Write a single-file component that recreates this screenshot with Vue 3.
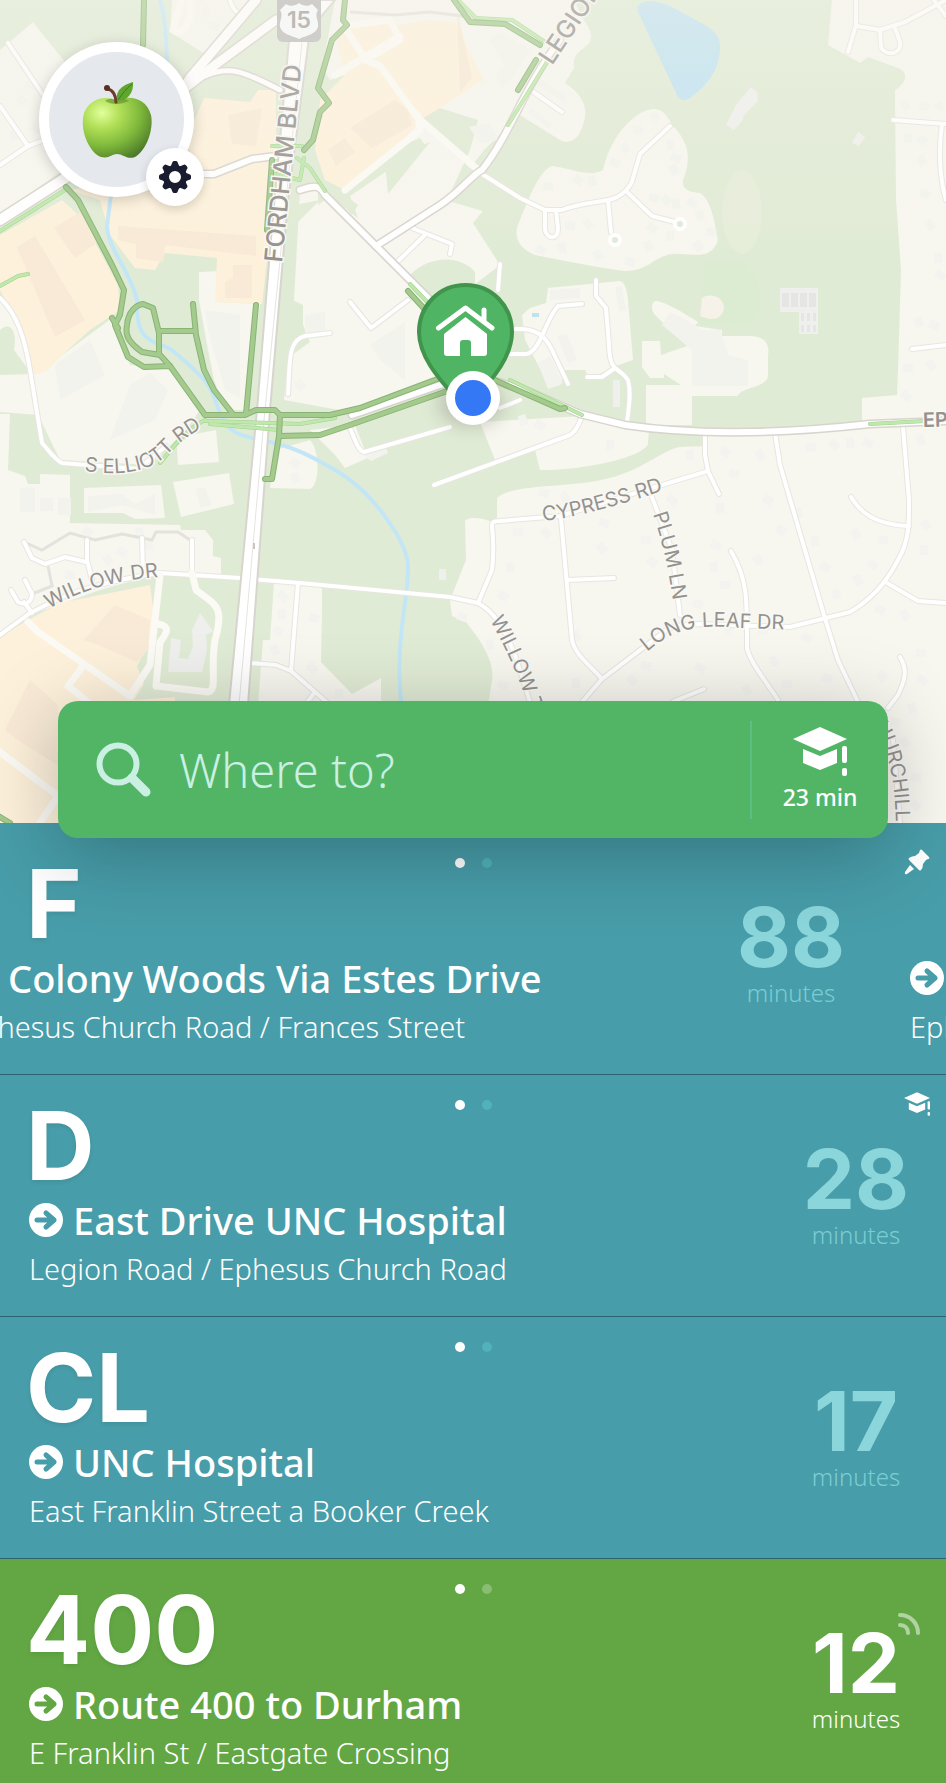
<script setup>
import { ref } from 'vue'

const query = ref('')

const land = [
  'M0 50L33 22L65 62L52 148L0 170Z',
  'M172 0H256L205 54L170 32Z',
  'M0 168L20 158L50 150L60 172L0 215Z',
  'M335 0H575C582 25 595 28 590 42C582 52 572 52 574 68L565 83C580 93 590 105 583 125C578 142 568 144 560 140L520 115L484 150L445 200L483 211L473 223L500 265L474 285V300L440 385L350 412L284 400L294 300L300 190L330 190L352 215L358 205L325 180L318 90Z',
  'M552 166C570 168 590 178 603 170C612 130 640 108 655 109C665 110 668 118 672 125C690 143 690 158 685 175C678 190 690 192 700 193C712 200 715 225 718 240C712 258 700 255 680 254C655 252 650 272 625 271C600 268 560 260 535 255C518 248 512 235 520 220C530 195 540 170 552 166Z',
  'M832 0H946V424L862 426V398L897 395L898 370L901 270L896 200L895 90C908 82 908 72 898 68L868 57L860 63L828 45Z',
  'M655 301C665 300 698 322 698 322L695 326L722 330V336H750C765 336 770 345 768 355V375C768 388 740 387 738 396H692V425H646V385L681 385L664 374V378L650 378L642 367V341H660L661 355L687 346L655 315C650 308 652 303 655 301Z',
  'M548 288L620 281C625 282 627 290 628 300L633 360L610 368L590 380L585 370L565 370L560 385L550 388L525 340L522 315L530 308L546 303Z',
  'M480 422L583 416L649 433L648 442C650 455 590 470 540 470L535 450L495 460Z',
  'M497 498C510 485 560 487 590 482C640 475 660 450 680 447L705 446V434L946 424V823H470L492 680C495 660 480 640 466 622L452 616L450 600L466 560L465 520C475 515 490 520 497 525Z',
  'M0 300L15 320L35 375L112 318L130 365L168 368L200 410L186 430L150 465L60 460L38 415L0 412Z',
  'M199 272L220 271L218 302L260 304L246 410H226L214 380L208 350L199 300Z',
  'M0 414H10L8 470L25 476L28 484H40V474L70 475V523L180 525L181 530H205L213 540V556L221 558V575L160 573L100 590L30 615L0 635Z',
  'M84 488L161 485L165 518L135 519L123 513H84Z',
  'M173 482L229 473L234 504L181 517Z',
  'M177 447L190 435L216 430L219 462L178 465Z',
  'M275 450L310 440C320 450 320 485 310 489L270 488Z',
  'M310 430L355 425L368 458L345 468L335 455Z',
  'M274 582L322 584V611L321 662L352 694L381 678V705H258L263 640H270Z'
]

const park = [
  'M300 110L320 65L330 80L345 75L322 150L318 182L300 150Z',
  'M318 182L420 138L425 145L350 196L358 218L330 196L318 205Z',
  'M400 120L440 108L478 120L470 150L445 205L472 170L425 125Z',
  'M410 275C430 255 460 255 475 272V300L430 310Z',
  'M295 205L320 200L295 225L293 300L303 305V325L310 342L285 360Z',
  'M385 160L430 142L388 194Z',
  'M0 330C10 320 18 332 14 350L30 372V374L0 375Z'
]

const retail = [
  'M0 235L62 200L82 218L118 285L120 310L90 330L60 357L48 370L35 375L15 320L0 290Z',
  'M70 190L130 180L190 130L204 98L250 102L258 90L276 90L276 170L270 235L262 304L215 302L217 258L165 253L155 270L135 268L110 235L100 200Z',
  'M340 55C330 30 350 25 375 22L400 25L425 20L455 22L484 80L440 108L420 120L400 145L345 190L325 180L315 150L320 100L345 75Z',
  'M28 620L60 603L150 585L153 608L151 640L137 666L144 684L134 700L175 697V823H0V637Z'
]

const buildings = [
  'M17 247L35 236L85 320L55 337Z', 'M54 228L80 212L98 242L75 258Z', 'M118 226L256 236V256L165 245L163 262L136 258V244L118 240Z',
  'M228 115L262 108L256 146L232 144Z', 'M233 265H252V298H225V282L233 278Z', 'M350 128L395 100L408 110L412 125L372 148Z',
  'M328 150L345 138L355 152L336 166Z', 'M84 640L115 605L150 620L148 650L137 662L98 645Z', 'M5 730L30 680L58 705V765L25 745Z', 'M457 10L472 78L460 92Z'
]

const blocks = [
  'M490 40L500 32L530 50L510 80L502 88L495 76L505 66Z', 'M205 310L240 315V398L225 390L208 330Z', 'M55 365L90 340L105 375L60 400Z',
  'M130 385L150 373L168 390L155 420L110 440Z', 'M305 315L325 312V332L305 335Z', 'M88 496L122 494L135 504L155 494V515L123 505L88 512Z',
  'M196 488H205L212 505L200 508Z', 'M40 498H53V511H40Z', 'M58 498H71V515H58Z', 'M20 488L35 487V512H20Z',
  'M687 320L670 312L662 325L692 350V386H748V360L728 355L720 330L700 330Z', 'M550 290L580 288V298L550 300Z', 'M557 336L567 334L577 360L568 363Z',
  'M538 363L550 356L563 383L548 389Z', 'M615 287L622 286L626 310L619 312Z', 'M370 345L405 322V380L380 360Z', 'M361 453L384 444L388 453L371 461Z', 'M530 80L540 78L565 95V103Z',
  'M469 127L490 122L498 140L480 143Z', 'M528 112L532 108L552 124L550 130Z'
]

const greyBlocks = [
  'M780 288H818V334H799V312H780Z', 'M171 638L181 640L179 658L188 659L193 646L192 630L200 613L205 620L213 631L206 635L207 650L202 672H168Z',
  'M736 105L751 87L757 92L758 101L744 115L742 121L734 130L726 125Z', 'M858 132L865 137L859 146L852 143Z', 'M613 380H620V407H613Z', 'M439 569H446V580H439Z'
]

/* Scattered house footprints in the residential streets. */
const houses = [
  [548, 186], [578, 180], [592, 181], [615, 163], [625, 148], [638, 130], [655, 117], [670, 145], [676, 158], [674, 170], [654, 198], [666, 200], [676, 204],
  [692, 203], [700, 215], [711, 232], [698, 246], [670, 236], [652, 228], [648, 246], [630, 262], [598, 255], [570, 226], [588, 224], [562, 248], [541, 250],
  [905, 105], [924, 107], [940, 107], [908, 138], [922, 140], [922, 160], [925, 194], [930, 225], [938, 258], [940, 275], [919, 322], [934, 325], [931, 365], [908, 368], [906, 396],
  [690, 455], [725, 452], [760, 455], [811, 447], [834, 445], [850, 443], [868, 443], [921, 440], [734, 474], [672, 500], [720, 508], [768, 500], [798, 513], [604, 523], [602, 548],
  [646, 540], [652, 562], [714, 567], [716, 545], [758, 560], [725, 585], [781, 530], [815, 541], [825, 567], [856, 534], [883, 540], [926, 525], [924, 550], [873, 565], [858, 580],
  [698, 604], [728, 628], [763, 630], [807, 638], [836, 594], [880, 610], [905, 615], [518, 532], [546, 533], [510, 567], [503, 596], [576, 636], [646, 666], [632, 680], [576, 683],
  [700, 668], [774, 661], [827, 678], [882, 676], [921, 653], [922, 680], [912, 708], [895, 722], [905, 742], [916, 777], [916, 805], [490, 645], [503, 685], [747, 690], [787, 684],
  [283, 596], [282, 614], [278, 631], [275, 650], [314, 618], [312, 668], [339, 694], [295, 463], [295, 478], [462, 617], [108, 560], [70, 575], [88, 532], [140, 533], [122, 552], [148, 545],
  [30, 85], [22, 100], [14, 135], [36, 128], [206, 12], [214, 26], [300, 385], [610, 445], [540, 425], [523, 420], [544, 493], [565, 497]
]

const minor = [
  'M8 43L45 98', 'M0 106L28 146', 'M0 165L28 146L50 138', 'M230 0C232 8 236 12 240 14', 'M0 298C18 315 25 340 30 370L42 443C50 452 55 460 62 463L138 469L166 446',
  'M350 302L371 328L408 300', 'M330 333L305 336C288 340 290 360 288 394', 'M412 228L452 244L450 254', 'M424 236L395 264',
  'M482 174L520 198L545 210L562 210C580 203 600 202 608 200C622 198 632 185 633 178L640 154L670 126', 'M545 210V230C548 240 558 240 558 228L556 210',
  'M608 200L611 232', 'M627 192L652 216L675 222', 'M596 280V296L606 308L609 345C610 375 618 365 628 380C632 395 628 410 627 423', 'M615 368L602 377H587',
  'M516 329C535 328 545 335 552 350L568 384', 'M510 354H525C540 354 545 320 558 306L582 304', 'M500 264L498 290', 'M856 0V25L848 52', 'M857 26L880 30L905 22L946 0', 'M880 30L881 48C890 58 902 52 900 42L895 28', 'M934 0L946 16',
  'M893 120L946 124M942 125C938 150 940 180 946 200', 'M912 349L946 345', 'M532 91L562 112', 'M434 485L570 435C578 430 580 420 582 416',
  'M350 428C356 442 358 450 364 452L450 427', 'M500 408L520 400', 'M0 635L30 613L60 598C80 590 110 580 160 573L240 578L300 583L450 597L478 603C495 612 505 630 515 655L530 702',
  'M478 603L492 570C495 545 492 530 492 526C492 522 494 521 500 521L560 516L708 471', 'M705 434V455L708 471L719 494', 'M561 518L572 640C575 655 590 665 602 679',
  'M650 492L672 550L680 615', 'M568 580L614 578', 'M582 702L602 679L660 635C670 625 685 624 700 624L790 627L850 612C870 600 885 585 898 560C910 540 909 520 909 500L903 427',
  'M775 433L780 465L824 615L838 660L858 702', 'M731 551C748 580 747 600 747 648C750 662 765 680 778 700', 'M851 497C860 512 875 525 909 526', 'M887 583L918 601L946 603',
  'M900 657C908 670 905 680 898 695L888 708', 'M893 740L900 823', 'M672 702L704 689', 'M298 583L291 671M250 663L276 665L291 671L330 705M305 705L315 692', 'M142 538L143 572M192 540L192 573M87 540V560L92 580M24 542L32 558L45 564L65 557L86 562',
  'M11 590L18 602C30 608 35 595 30 590L25 580M24 602L32 613'
]

const lanes = [
  'M28 622L38 632L130 696', 'M83 666L68 686L95 708', 'M130 696L150 665L160 575', 'M158 624C170 626 168 632 160 642L156 686L208 692C218 690 210 670 215 640C225 605 215 605 196 590L192 573',
  'M0 752L58 796L40 823', 'M345 190L420 130L418 115M365 60L400 40L390 20L350 25', 'M345 28L366 60L380 66L418 118L478 170', 'M335 75L400 36', 'M182 0L173 30C185 38 192 20 190 0'
]

const major = [
  { d: 'M256 0L190 78L175 100', w: 9 }, { d: 'M276 20L215 65L180 92', w: 9 }, { d: 'M0 220L70 175', w: 10 },
  { d: 'M203 174H214L252 159L276 156', w: 6 }, { d: 'M205 76C230 65 245 72 280 90', w: 5 },
  { d: 'M300 190C315 185 320 185 325 195L376 246L430 300L480 375', w: 6 }, { d: 'M376 246L440 205C460 192 475 172 482 170C510 135 525 85 560 40', w: 6 },
  { d: 'M352 415L440 385L480 376L530 392L580 414L625 425C700 436 780 434 870 424L946 421', w: 6 }
]

const trails = [
  'M66 187L78 200L112 265L124 290L120 315L115 325L128 357L144 367L170 366L200 408L205 415H245L256 410H275L280 415H330L360 408L440 378L470 370',
  'M170 366L160 355L142 352C128 342 125 335 127 325C128 312 136 305 143 304L153 308L159 333V355', 'M159 331H194', 'M193 304L196 335L204 370L214 390L232 413', 'M256 305L246 414', 'M112 318L118 328',
  'M280 415L279 436L320 435L350 425L430 397L480 380', 'M279 436L272 479L265 479', 'M345 0L343 20L347 25L332 40L318 88L329 103L320 112L313 140L304 150',
  'M144 0L143 45', 'M0 817L10 823', 'M454 0L470 22L505 24L540 45', 'M536 60L518 90', 'M408 291L430 315', 'M490 378L560 409L565 408', 'M272 160L267 230'
]

const paths = [
  'M0 231L65 190', 'M0 286L18 276L28 274', 'M205 421L300 424L335 418', 'M210 424L280 430', 'M205 420C185 430 175 445 160 463', 'M297 158L310 168L325 191M272 146H302M304 158L300 180L275 174',
  'M458 0L476 18L512 20L545 42M547 62L508 125', 'M410 284L430 305', 'M510 380L582 415', 'M870 424L925 421'
]

const labels = [
  { id: 'fordham', d: 'M282 263L306 20', text: 'FORDHAM BLVD', size: 'road' },
  { id: 'legion', d: 'M552 66L640 -66', text: 'LEGION RD', size: 'road' },
  { id: 'ephesus', d: 'M923 427L1100 423', text: 'EPHESUS', size: 'main' },
  { id: 'elliott', d: 'M84 471Q142 479 166 456Q190 430 234 412', text: 'S ELLIOTT RD' },
  { id: 'willow', d: 'M49 609C85 588 120 578 180 576', text: 'WILLOW DR' },
  { id: 'cypress', d: 'M543 521C580 517 620 505 690 482', text: 'CYPRESS RD' },
  { id: 'plum', d: 'M653 514C663 545 670 570 676 625', text: 'PLUM LN' },
  { id: 'longleaf', d: 'M647 652C675 628 698 624 740 628L830 631', text: 'LONG LEAF DR' },
  { id: 'willowterrace', d: 'M490 620C505 647 522 680 545 755', text: 'WILLOW TER' },
  { id: 'churchill', d: 'M866 713C888 745 897 775 896 850', text: 'CHURCHILL' }
]

const arrivals = [
  {
    route: 'F', minutes: 88, tone: 'teal', badge: 'pin', scroll: 65,
    title: 'Colony Woods Via Estes Drive', stop: 'Ephesus Church Road / Frances Street',
    next: { title: 'UNC Hospital', stop: 'Ephesus Church Road' }
  },
  { route: 'D', minutes: 28, tone: 'teal', badge: 'cap', scroll: 0, title: 'East Drive UNC Hospital', stop: 'Legion Road / Ephesus Church Road' },
  { route: 'CL', minutes: 17, tone: 'teal', scroll: 0, title: 'UNC Hospital', stop: 'East Franklin Street a Booker Creek' },
  { route: '400', minutes: 12, tone: 'green', live: true, scroll: 0, title: 'Route 400 to Durham', stop: 'E Franklin St / Eastgate Crossing' }
]
</script>

<template>
  <main class="app">
    <section class="map" aria-label="Map">
      <svg class="canvas" viewBox="0 0 946 823">
        <defs>
          <linearGradient id="haze" x1="0" y1="0" x2="0" y2="1">
            <stop offset="0" stop-color="#f6f3ea" stop-opacity=".4" />
            <stop offset="1" stop-color="#f6f3ea" stop-opacity="0" />
          </linearGradient>
          <radialGradient id="apple" cx=".28" cy=".25" r=".85">
            <stop offset="0" stop-color="#e2ff9c" />
            <stop offset=".3" stop-color="#b2e058" />
            <stop offset=".65" stop-color="#7fb93b" />
            <stop offset="1" stop-color="#4d7a2a" />
          </radialGradient>
          <path v-for="l in labels" :id="l.id" :key="l.id" :d="l.d" />
        </defs>
        <rect width="946" height="823" fill="#e0ebd5" />
        <ellipse cx="742" cy="212" rx="20" ry="42" fill="#e6edd9" />
        <path d="M705 262H745C765 285 765 310 750 325H700Z" fill="#dcecd2" />
        <g fill="#f7f6ef"><path v-for="d in land" :key="d" :d="d" /></g>
        <g fill="#e0ebd5"><path v-for="d in park" :key="d" :d="d" /></g>
        <g fill="#fdf1db"><path v-for="d in retail" :key="d" :d="d" /></g>
        <g fill="#f8ead6"><path v-for="d in buildings" :key="d" :d="d" /></g>
        <g fill="#f3f3ee"><path v-for="d in blocks" :key="d" :d="d" /></g>
        <g fill="#f3f3ef"><rect v-for="([x, y], i) in houses" :key="i" :x="x - 5" :y="y - 4" width="10" height="8" :transform="`rotate(${(i * 37) % 90} ${x} ${y})`" /></g>
        <g fill="#efefed"><path v-for="d in greyBlocks" :key="d" :d="d" /></g>
        <g fill="#e5e5e3"><path d="M782 293H789V307H782ZM791 293H798V307H791ZM800 293H807V307H800ZM809 293H816V307H809ZM801 313H804V321H801ZM807 313H810V321H807ZM813 313H816V321H813ZM801 325H804V332H801ZM807 325H810V332H807ZM813 325H816V332H813Z" /></g>
        <path d="M702 298C712 292 724 298 724 308C722 322 708 320 700 316Z" fill="#f6f1e9" />
        <path d="M638 12C634 -1 655 -1 670 6L705 25C722 35 720 45 720 50C718 75 703 88 690 98C684 102 680 100 677 95Z" fill="#bfe2f1" />
        <rect x="532" y="313" width="7" height="4" fill="#bfe2ef" />
        <g class="creek">
          <path d="M160 0C166 20 166 40 167 62M111 195L107 226C108 250 130 270 137 300C135 345 155 340 172 350C200 375 210 380 218 408C228 435 240 435 260 440C290 445 310 455 340 473C375 495 410 545 408 570C408 600 395 640 401 702" />
        </g>
        <path class="walk" d="M24 542L42 550L70 533L95 540L122 534L152 540L156 532H178L190 540M48 566L52 586L32 594M350 12L395 15L430 12L478 18" />
        <g class="road-case"><path v-for="d in minor" :key="d" :d="d" /></g>
        <g class="road-fill"><path v-for="d in minor" :key="d" :d="d" /></g>
        <g class="lane"><path v-for="d in lanes" :key="d" :d="d" /></g>
        <g fill="#e0ebd5" class="circle"><circle cx="615" cy="240" r="5" /><circle cx="680" cy="224" r="5" /></g>
        <g class="major-case"><path v-for="r in major" :key="r.d" :d="r.d" :stroke-width="r.w + 3" /></g>
        <g class="major-fill"><path v-for="r in major" :key="r.d" :d="r.d" :stroke-width="r.w" /></g>
        <path class="highway-case" d="M289 40L270 250L257 410L229 705H248L270 410L288 200L310 30L335 0H320L300 10Z" />
        <path class="highway-line" d="M302 42L279 270L264 420L239 705" />
        <g class="path-case"><path v-for="d in paths" :key="d" :d="d" /></g>
        <g class="path-fill"><path v-for="d in paths" :key="d" :d="d" /></g>
        <g class="trail-case"><path v-for="d in trails" :key="d" :d="d" /></g>
        <g class="trail-fill"><path v-for="d in trails" :key="d" :d="d" /></g>
        <path d="M254 543V549" stroke="#c9c5c0" stroke-width="2" />
        <text v-for="l in labels" :key="l.id" :class="['label', l.size]"><textPath :href="'#' + l.id">{{ l.text }}</textPath></text>
        <rect width="946" height="260" fill="url(#haze)" />
        <rect x="277" y="-6" width="44" height="48" rx="6" fill="#cfcecb" />
        <path d="M286 4C290 7 295 6 299 3C303 6 308 7 312 4L318 10C314 16 319 20 318 27C316 34 308 35 299 39C290 35 282 34 280 27C279 20 284 16 280 10Z" fill="#f7f7f5" />
        <text class="shield" x="299" y="28">15</text>
        <ellipse class="pin-shadow" cx="471" cy="404" rx="32" ry="22" />
        <path d="M465.500 285C439 285 419 306 419 332C419 356 438 378 456 398H475C494 378 512 356 512 332C512 306 492 285 465.500 285Z" fill="#50b465" stroke="#41944b" stroke-width="4" />
        <path d="M438.500 328L465.500 308L492 328" fill="none" stroke="#fff" stroke-width="5" stroke-linecap="round" stroke-linejoin="round" />
        <path d="M484 310V320" stroke="#fff" stroke-width="5" stroke-linecap="round" />
        <path d="M465.500 317L487 334V353Q487 356 484 356H471V343Q471 340 468 340H463Q460 340 460 343V356H447Q444 356 444 353V334Z" fill="#fff" />
        <circle cx="473" cy="398" r="27" fill="#fff" />
        <circle cx="473" cy="398" r="18" fill="#3478f6" />
      </svg>
      <div class="profile">
        <button class="avatar" type="button" aria-label="Profile">
          <svg viewBox="0 0 72 78" width="72" height="78">
            <path d="M36 20C27 14 9 16 3 32C-2 50 9 72 20 76C28 78 31 73 36 73C42 73 46 79 54 76C65 70 73 49 70 34C65 15 45 14 36 20Z" fill="url(#apple)" />
            <path d="M24 20C31 24 39 24 48 20C43 17 40 18 36 20C32 17 28 17 24 20Z" fill="#5b8a2b" opacity=".6" />
            <path d="M27 8C32 9 35 15 35 21" fill="none" stroke="#6b3d2c" stroke-width="3" stroke-linecap="round" />
            <circle cx="26" cy="7" r="3" fill="#5b2f22" />
            <path d="M36 20C34 8 43 4 52 1C53 11 47 20 36 20Z" fill="#5fa52e" />
            <path d="M37 19C41 13 45 8 51 3" fill="none" stroke="#3f7e1f" stroke-width="1" />
          </svg>
        </button>
        <button class="settings" type="button" aria-label="Settings">
          <svg viewBox="-17 -17 34 34" width="34" height="34" fill="#191c2e">
            <circle r="9" fill="none" stroke="#191c2e" stroke-width="6" />
            <path v-for="n in 8" :key="n" d="M-4.500 -10L-2.500 -15Q-2 -16 -1 -16H1Q2 -16 2.500 -15L4.500 -10Z" :transform="`rotate(${n * 45})`" />
          </svg>
        </button>
      </div>
    </section>

    <form class="search" @submit.prevent>
      <label class="field">
        <svg viewBox="0 0 56 56" width="56" height="56" fill="none" stroke="#c9f0e2" aria-hidden="true">
          <circle cx="22" cy="22" r="18.500" stroke-width="6" />
          <path d="M36 36L50 50" stroke-width="9" stroke-linecap="round" />
        </svg>
        <input v-model="query" type="text" placeholder="Where to?" aria-label="Where to?" />
      </label>
      <button class="school" type="button">
        <svg viewBox="0 0 54 49" width="54" height="49" fill="#fff" aria-hidden="true">
          <path d="M27 0L54 12L27 24L0 12ZM10 22L27 29L44 22V36L27 43L10 36Z" />
          <rect x="49" y="19" width="5" height="17" rx="2" />
          <rect x="49" y="41" width="5" height="8" rx="2" />
        </svg>
        <span>23 min</span>
      </button>
    </form>

    <section class="arrivals" aria-label="Nearby departures">
      <article v-for="a in arrivals" :key="a.route" :class="['arrival', a.tone]">
        <h2 class="route">{{ a.route }}</h2>
        <div class="pages" :style="{ marginLeft: -a.scroll + 'px' }">
          <div class="page">
            <div class="info">
              <p class="title">
                <svg viewBox="0 0 34 34" width="34" height="34" aria-hidden="true"><circle cx="17" cy="17" r="17" fill="#fff" /><path class="arrow" d="M8 17H25M17 10L25 17L17 24" /></svg>
                <span>{{ a.title }}</span>
              </p>
              <p class="stop">{{ a.stop }}</p>
            </div>
            <div class="eta">
              <strong>{{ a.minutes }}</strong>
              <span>minutes</span>
              <svg v-if="a.live" class="live" viewBox="0 0 24 24" width="24" height="24" aria-hidden="true"><path d="M3 3C13 3 21 11 21 21M3 13C8 13 11 16 11 21" /></svg>
            </div>
          </div>
          <div v-if="a.next" class="page">
            <div class="info">
              <p class="title">
                <svg viewBox="0 0 34 34" width="34" height="34" aria-hidden="true"><circle cx="17" cy="17" r="17" fill="#fff" /><path class="arrow" d="M8 17H25M17 10L25 17L17 24" /></svg>
                <span>{{ a.next.title }}</span>
              </p>
              <p class="stop">{{ a.next.stop }}</p>
            </div>
          </div>
        </div>
        <div class="dots"><i class="dot on"></i><i class="dot"></i></div>
        <svg v-if="a.badge === 'pin'" class="badge" viewBox="0 0 26 26" width="26" height="26" fill="#fff" aria-hidden="true">
          <path d="M16 1Q17 0 18 1L25 8Q26 10 24 10L22 11L19 15Q19 19 17 21Q16 22 15 21L5 11Q4 10 5 9Q8 7 11 7L15 4ZM6 16L10 20L3 25Q0 26 1 23Z" />
        </svg>
        <svg v-if="a.badge === 'cap'" class="badge" viewBox="0 0 54 49" width="26" height="24" fill="#fff" aria-hidden="true">
          <path d="M27 0L54 12L27 24L0 12ZM10 22L27 29L44 22V36L27 43L10 36Z" />
          <rect x="49" y="19" width="5" height="17" rx="2" />
          <rect x="49" y="41" width="5" height="8" rx="2" />
        </svg>
      </article>
    </section>
  </main>
</template>

<style>
body {
  margin: 0;
  background: #62a744;
}
</style>

<style scoped>
.app {
  font-family: "Noto Sans", "Open Sans", sans-serif;
  color: #fff;
  overflow: hidden;
}
button {
  font: inherit;
  color: inherit;
  border: 0;
  padding: 0;
  cursor: pointer;
}
svg { display: block; flex: none; }
.map { position: relative; overflow: hidden; }
.canvas { width: 100%; height: auto; }
.canvas g { stroke-linecap: round; stroke-linejoin: round; }
.creek { fill: none; stroke: #c3e6f7; stroke-width: 4; }
.walk { fill: none; stroke: #e4e2dc; stroke-width: 3; }
.road-case { fill: none; stroke: #e7e6e0; stroke-width: 6; }
.road-fill { fill: none; stroke: #fff; stroke-width: 4; }
.lane { fill: none; stroke: #fbfaf4; stroke-width: 7; }
.circle { stroke: #fff; stroke-width: 4; }
.major-case { fill: none; stroke: #d8d4ce; }
.major-fill { fill: none; stroke: #fff; }
.highway-case { fill: #fff; stroke: #d8d4ce; stroke-width: 2; }
.highway-line { fill: none; stroke: #e6e4e0; stroke-width: 1; }
.path-case { fill: none; stroke: #a2d28d; stroke-width: 4; }
.path-fill { fill: none; stroke: #bfe8ac; stroke-width: 3; }
.trail-case { fill: none; stroke: #88b474; stroke-width: 6; }
.trail-fill { fill: none; stroke: #a4ca8e; stroke-width: 4; }
.label {
  font: 400 20px Inter, sans-serif;
  fill: #94928f;
  stroke: #f9f8f3;
  stroke-width: 3px;
  paint-order: stroke;
}
.label.road { font-size: 25px; font-weight: 500; fill: #94918e; }
.label.main { font-size: 20px; font-weight: 600; }
.shield { font: 600 23px Inter, sans-serif; fill: #bdbbb8; text-anchor: middle; }
.pin-shadow { fill: rgba(0, 0, 0, .18); filter: blur(9px); }

.profile { position: absolute; top: 42px; left: 39px; }
.avatar {
  display: flex;
  align-items: center;
  justify-content: center;
  width: 155px;
  height: 155px;
  border: 10px solid #fff;
  border-radius: 50%;
  background: #e5e9ed;
  box-shadow: 0 3px 14px rgba(0, 0, 0, .18);
}
.settings {
  position: absolute;
  right: -10px;
  bottom: -9px;
  display: flex;
  align-items: center;
  justify-content: center;
  width: 58px;
  height: 58px;
  border-radius: 50%;
  background: #fff;
  box-shadow: 0 3px 10px rgba(0, 0, 0, .16);
}

.search {
  position: relative;
  z-index: 1;
  display: flex;
  align-items: center;
  height: 137px;
  margin: -122px 58px -15px;
  border-radius: 20px;
  background: #52b566;
  box-shadow: 0 16px 80px rgba(0, 0, 0, .26);
}
.field {
  flex: 1;
  display: flex;
  align-items: center;
  gap: 27px;
  min-width: 0;
  padding-left: 38px;
}
.field input {
  flex: 1;
  min-width: 0;
  height: 80px;
  padding: 0;
  border: 0;
  outline: 0;
  background: none;
  color: #fff;
  font: 300 47px "Noto Sans", sans-serif;
}
.field input::placeholder { color: #c9f0e2; opacity: 1; }
.school {
  display: flex;
  flex-direction: column;
  align-items: center;
  justify-content: center;
  gap: 5px;
  width: 138px;
  height: 98px;
  border-left: 2px solid #5bbf85;
  background: none;
  font-size: 23px;
  font-weight: 500;
  line-height: 32px;
}

.arrival {
  position: relative;
  display: grid;
  height: 241px;
  border-bottom: 1px solid #2b6470;
  background: #479da9;
  overflow: hidden;
}
.arrival:first-child { padding-top: 10px; }
.arrival:last-child { height: 225px; border-bottom: 0; }
.green { background: #62a744; }
.route {
  grid-area: 1 / 1;
  margin: 23px 0 0 26px;
  font: 700 95px/96px Inter, sans-serif;
  text-shadow: 0 2px 4px rgba(0, 0, 0, .08);
}
.pages { grid-area: 1 / 1; display: flex; min-width: 0; }
.page {
  flex: none;
  box-sizing: border-box;
  display: flex;
  justify-content: space-between;
  width: 100vw;
  padding: 0 30px 0 29px;
}
.info { padding-top: 121px; white-space: nowrap; }
.title {
  display: flex;
  align-items: center;
  gap: 10px;
  margin: 0 0 5px;
  font-size: 38px;
  font-weight: 500;
  line-height: 48px;
}
.stop { margin: 0; font-size: 29px; font-weight: 300; line-height: 40px; }
.arrow { fill: none; stroke: #479da9; stroke-width: 5; stroke-linecap: round; stroke-linejoin: round; }
.green .arrow { stroke: #62a744; }
.eta {
  position: relative;
  display: flex;
  flex-direction: column;
  align-items: center;
  width: 120px;
  padding-top: 64px;
  color: #8bd6db;
}
.eta strong { font: 700 83px/80px Inter, sans-serif; }
.eta span { font-size: 24px; font-weight: 300; line-height: 32px; color: #7bcdd5; }
.green .eta, .green .eta span { color: #fff; }
.live { position: absolute; top: 53px; right: -5px; }
.live path { fill: none; stroke: #b0d3a1; stroke-width: 4; stroke-linecap: round; }
.dots {
  position: absolute;
  top: 25px;
  left: 50%;
  display: flex;
  gap: 17px;
  margin-left: -18px;
}
.arrival:first-child .dots { top: 35px; }
.dot { width: 10px; height: 10px; border-radius: 50%; background: #51b3ba; }
.green .dot { background: #89bd72; }
.dot.on { background: #fff; }
.badge { position: absolute; top: 17px; right: 16px; }
.arrival:first-child .badge { top: 26px; }
</style>
